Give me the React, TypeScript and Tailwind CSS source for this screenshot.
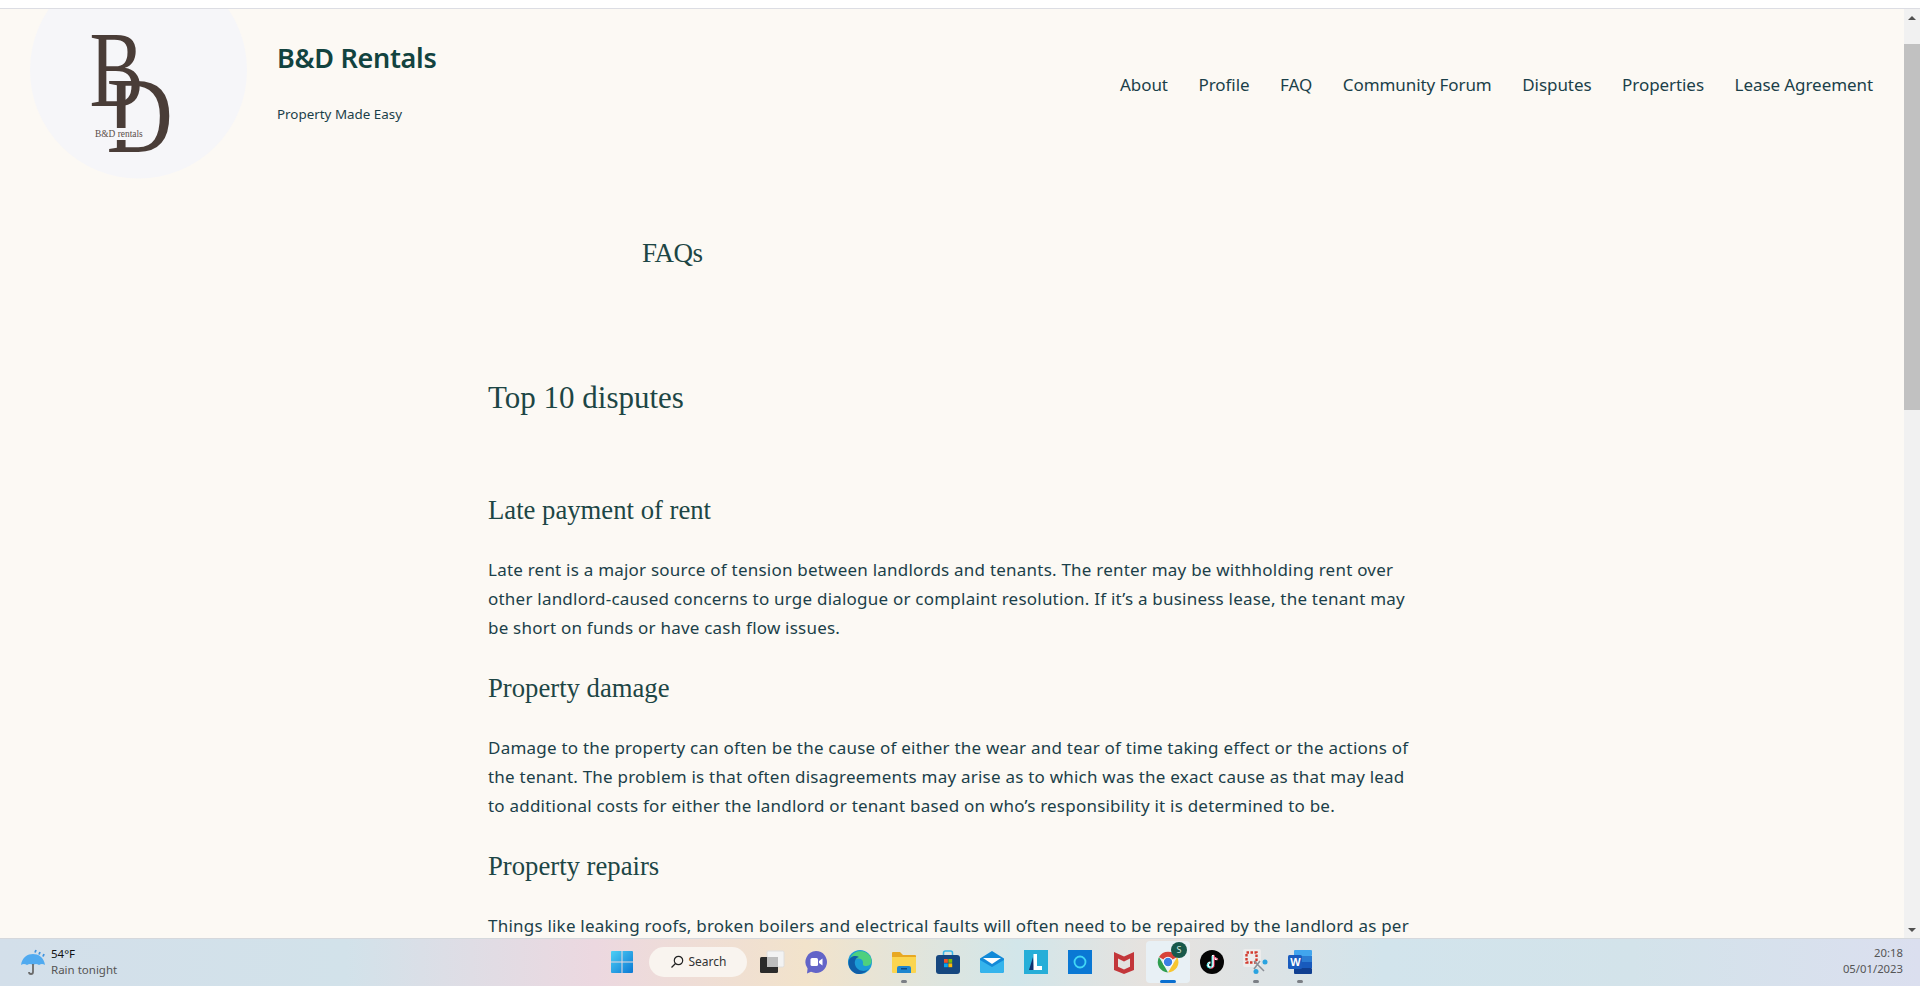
import React from "react";

const sans = "font-['Noto_Sans','Open_Sans',sans-serif]";
const serif = "font-['Liberation_Serif',serif]";

function Logo() {
  return (
    <svg width="217" height="170" viewBox="0 0 217 170" className="block shrink-0">
      <circle cx="108.500" cy="61" r="108.500" fill="#f6f6f9" />
      <g fill="#4a3d38" fontFamily="Liberation Serif, serif">
        <text x="0" y="0" fontSize="107" transform="translate(59.600 97) scale(0.76 1)">B</text>
        <text x="0" y="0" fontSize="107" transform="translate(76.500 143) scale(0.86 1)">D</text>
      </g>
      <rect x="83" y="119" width="14" height="12" fill="#f6f6f9" />
      <text x="65" y="128" fontSize="9.400" fill="#5a4d48" fontFamily="Liberation Serif, serif">B&amp;D rentals</text>
    </svg>
  );
}

function WinIcon() {
  return (
    <svg width="24" height="24" viewBox="0 0 24 24">
      <defs>
        <linearGradient id="w" x1="0" y1="0" x2="1" y2="1">
          <stop offset="0" stopColor="#4fd0f5" />
          <stop offset="1" stopColor="#0a78d4" />
        </linearGradient>
      </defs>
      <path d="M1 2a1 1 0 0 1 1-1h9.500v10.500H1zM12.500 1H22a1 1 0 0 1 1 1v9.500H12.500zM1 12.500h10.500V23H2a1 1 0 0 1-1-1zM12.500 12.500H23V22a1 1 0 0 1-1 1h-9.500z" fill="url(#w)" />
    </svg>
  );
}

const Slot = ({ children, dot, active }: { children: React.ReactNode; dot?: boolean; active?: boolean }) => (
  <div className={`relative flex h-[42px] w-[44px] items-center justify-center rounded ${active ? "bg-[#e8f0f5]" : ""}`}>
    {children}
    {dot && <span className="absolute bottom-0 left-[19px] h-[3px] w-[6px] rounded-full bg-[#7b7f85]" />}
    {active && <span className="absolute bottom-0 left-[14px] h-[3px] w-[16px] rounded-full bg-[#0a6fd0]" />}
  </div>
);

function TaskIcons() {
  return (
    <div className="flex items-center">
      <Slot>
        <svg width="26" height="24" viewBox="0 0 26 24">
          <rect x="8" y="1" width="17" height="16" rx="1.500" fill="#f3f3f3" stroke="#dedede" />
          <rect x="1" y="7" width="18" height="16" rx="1.500" fill="#2b2b2b" />
          <rect x="8" y="7" width="11" height="10" fill="#bdbdbd" />
        </svg>
      </Slot>
      <Slot>
        <svg width="24" height="24" viewBox="0 0 24 24">
          <path d="M12 1a11 11 0 1 1-5 20.800L3 23.500l.6-5A11 11 0 0 1 12 1z" fill="#6264c8" />
          <rect x="6.500" y="8" width="7.500" height="8" rx="1.500" fill="#fff" />
          <path d="M15 11l3.500-2.500v7L15 13z" fill="#fff" />
        </svg>
      </Slot>
      <Slot>
        <svg width="24" height="24" viewBox="0 0 24 24">
          <circle cx="12" cy="12" r="12" fill="#1b9bd6" />
          <path d="M3 7C6 0 18-1 22.500 7c2.500 5 .5 9-4 9-3 0-4-1-3.500-3 .5-4-5-6-8.500-3C5 11 4 13 4 15 3 12 2 10 3 7z" fill="#4ed07e" />
          <path d="M.5 12c1-6 7-7 10.500-5-4 1-5 5-3.500 9 2 5 10 7 14 2-3 4.500-8 6-11 6C5 24 0 18 .5 12z" fill="#0f5ea8" />
        </svg>
      </Slot>
      <Slot dot>
        <svg width="24" height="24" viewBox="0 0 24 24">
          <path d="M0 3a1 1 0 0 1 1-1h7l3 3h12a1 1 0 0 1 1 1v3H0z" fill="#e8a823" />
          <path d="M0 7h24v15a1 1 0 0 1-1 1H1a1 1 0 0 1-1-1z" fill="#fbd54f" />
          <path d="M5 23v-5a2 2 0 0 1 2-2h10a2 2 0 0 1 2 2v5z" fill="#1e86cf" />
          <rect x="9" y="18" width="6" height="1.500" fill="#0b4a85" />
        </svg>
      </Slot>
      <Slot>
        <svg width="24" height="24" viewBox="0 0 24 24">
          <path d="M7.500 6V3a2 2 0 0 1 2-2h5a2 2 0 0 1 2 2v3" fill="none" stroke="#37b6e8" strokeWidth="1.500" />
          <rect x="0" y="5" width="24" height="19" rx="3" fill="#16477f" />
          <rect x="8" y="9" width="3.800" height="3.800" fill="#f35325" />
          <rect x="12.400" y="9" width="3.800" height="3.800" fill="#81bc06" />
          <rect x="8" y="13.400" width="3.800" height="3.800" fill="#05a6f0" />
          <rect x="12.400" y="13.400" width="3.800" height="3.800" fill="#ffba08" />
        </svg>
      </Slot>
      <Slot>
        <svg width="24" height="24" viewBox="0 0 24 24">
          <path d="M0 8.500 12 1l12 7.500V21a2 2 0 0 1-2 2H2a2 2 0 0 1-2-2z" fill="#128ad8" />
          <path d="M3 8h18l-9 6z" fill="#fff" />
          <path d="M0 10l12 7 12-7v11a2 2 0 0 1-2 2H2a2 2 0 0 1-2-2z" fill="#35b4ec" />
        </svg>
      </Slot>
      <Slot>
        <svg width="24" height="24" viewBox="0 0 24 24">
          <rect width="24" height="24" fill="#26aed8" />
          <path d="M5 20 9 7l1 9h7v4z" fill="#10306e" />
          <path d="M9.500 4H13v12h5v4H9.500z" fill="#fff" />
        </svg>
      </Slot>
      <Slot>
        <svg width="24" height="24" viewBox="0 0 24 24">
          <rect width="24" height="24" fill="#0a78d4" />
          <circle cx="12" cy="12" r="5.500" fill="none" stroke="#41d7f5" strokeWidth="1.800" />
        </svg>
      </Slot>
      <Slot>
        <svg width="24" height="26" viewBox="0 0 24 26">
          <path d="M12 25 2 21V3l10 4.500L22 3v18zM6 17.800l6 2.600 6-2.600V9.500l-6 3-6-3z" fill="#c3363a" />
        </svg>
      </Slot>
      <Slot active>
        <svg width="24" height="24" viewBox="0 0 24 24">
          <path d="M12 12 3 7a10.500 10.500 0 0 1 18.200 0z" fill="#d8433a" />
          <path d="M12 22.500 21.200 7A10.500 10.500 0 0 1 12 22.500z" fill="#f7c631" />
          <path d="M12 22.500A10.500 10.500 0 0 1 3 7l5 8.500z" fill="#2f9e4f" />
          <circle cx="12" cy="12" r="5.200" fill="#fff" />
          <circle cx="12" cy="12" r="4.200" fill="#3c7fe6" />
        </svg>
        <span className={`absolute right-[3px] top-[1px] flex h-[16px] w-[16px] items-center justify-center rounded-full bg-[#17594c] text-[9px] text-[#cfe5de] ${sans}`}>S</span>
      </Slot>
      <Slot>
        <svg width="24" height="24" viewBox="0 0 24 24">
          <circle cx="12" cy="12" r="12" fill="#050505" />
          <path d="M13 5v10a2.500 2.500 0 1 1-2.500-2.500M13 5c.3 2.500 2 4 4.500 4.200" fill="none" stroke="#fff" strokeWidth="2.200" />
          <path d="M12 6v9.500a2.500 2.500 0 1 1-2.800-2.600" fill="none" stroke="#25e4e4" strokeWidth="0.900" />
          <path d="M14.200 5.500v10a2.500 2.500 0 0 1-3 2.600M14.200 6c.5 1.800 2 3 4 3.300" fill="none" stroke="#f5285a" strokeWidth="0.900" />
        </svg>
      </Slot>
      <Slot dot>
        <svg width="26" height="26" viewBox="0 0 26 26">
          <rect x="0" y="0" width="18" height="18" rx="2" fill="#ececec" />
          <rect x="3.500" y="3.500" width="10" height="10" fill="none" stroke="#d23b2e" strokeWidth="2.400" strokeDasharray="2.500 1.500" />
          <path d="M11 12l10 10M17 12l-6 8" stroke="#8a8f96" strokeWidth="1.500" />
          <circle cx="22" cy="13" r="2.500" fill="#2aa3e0" />
          <circle cx="13" cy="22.500" r="2.500" fill="#2aa3e0" />
        </svg>
      </Slot>
      <Slot dot>
        <svg width="24" height="24" viewBox="0 0 24 24">
          <rect x="6" y="0" width="18" height="6" rx="1" fill="#41a5ee" />
          <rect x="6" y="6" width="18" height="6" fill="#2b7cd3" />
          <rect x="6" y="12" width="18" height="6" fill="#185abd" />
          <rect x="6" y="18" width="18" height="6" rx="1" fill="#103f91" />
          <rect x="0" y="5" width="14" height="14" rx="1.500" fill="#1a5cbe" />
          <text x="2.200" y="15.500" fontSize="11" fontWeight="700" fill="#fff" fontFamily="Liberation Sans, sans-serif">W</text>
        </svg>
      </Slot>
    </div>
  );
}

function Taskbar() {
  return (
    <footer className={`flex h-[48px] shrink-0 items-center border-t border-[#d5d8dc] pb-[1px] bg-[linear-gradient(90deg,#d3dfea_0%,#d2e2ea_18%,#ecd8e0_31%,#f2e3cb_42%,#d2e6ea_53%,#e7e2de_60%,#d2e4ec_72%,#d3e3ea_85%,#dbdfef_100%)] ${sans}`}>
      <div className="flex w-[610px] items-center pl-[20px]">
        <svg width="26" height="26" viewBox="0 0 26 26">
          <path d="M1 16C2 8 8 5 13 5s11 3 12 11c-2-1.500-4-1.500-6 0-2-1.500-4-1.500-6 0-2-1.500-4-1.500-6 0-2-1.500-4-1.500-6 0z" fill="#50aaf0" />
          <path d="M13 15v8a2 2 0 0 1-4 0" fill="none" stroke="#6b6b6b" strokeWidth="1.800" />
          <path d="M16 1l-1 2.500M20 3l-1 2.500M24 5l-1 2.500" stroke="#3f93e0" strokeWidth="1.800" />
        </svg>
        <div className="ml-[5px] flex flex-col text-[11.500px] leading-[16px]">
          <span className="text-[#111]">54°F</span>
          <span className="text-[#555]">Rain tonight</span>
        </div>
      </div>
      <WinIcon />
      <div className="ml-[15px] mr-[3px] flex h-[30px] w-[98px] items-center justify-center gap-[5px] rounded-full bg-[#f9f4ef] text-[12px] text-[#333]">
        <svg width="14" height="14" viewBox="0 0 14 14" fill="none" stroke="#222" strokeWidth="1.200">
          <circle cx="8.500" cy="5.500" r="4.200" />
          <path d="M5.500 8.500 1.500 12.500" />
        </svg>
        Search
      </div>
      <TaskIcons />
      <div className="ml-auto flex flex-col items-end pb-[2px] pr-[17px] text-[11.300px] leading-[16px] text-[#555]">
        <span>20:18</span>
        <span>05/01/2023</span>
      </div>
    </footer>
  );
}

function Scrollbar() {
  return (
    <div className="flex w-[16px] shrink-0 flex-col items-center bg-[#f1f1f1]">
      <div className="flex h-[17px] items-center">
        <div className="h-0 w-0 border-x-[4px] border-b-[4px] border-x-transparent border-b-[#505050]" />
      </div>
      <div className="mt-[18px] h-[366px] w-full bg-[#c1c1c1]" />
      <div className="mt-auto flex h-[17px] items-center">
        <div className="h-0 w-0 border-x-[4px] border-t-[4px] border-x-transparent border-t-[#505050]" />
      </div>
    </div>
  );
}

const nav = ["About", "Profile", "FAQ", "Community Forum", "Disputes", "Properties", "Lease Agreement"];

function Section({ title, children }: { title: string; children: React.ReactNode }) {
  return (
    <section>
      <h3 className={`text-[26.700px] leading-[34px] text-[#1d4645] ${serif}`}>{title}</h3>
      <p className="mt-[28px] text-[17px] leading-[29px] tracking-[0.22px] text-[#1b3f49]">{children}</p>
    </section>
  );
}

export default function App() {
  return (
    <div className={`flex h-screen flex-col overflow-hidden bg-white ${sans}`}>
      <div className="h-[9px] shrink-0 border-b border-[#dcdde3] bg-white" />
      <div className="flex min-h-0 flex-1">
        <main className="min-w-0 flex-1 overflow-hidden bg-[#fcf9f4]">
          <header className="flex h-[170px] items-start pl-[30px] pr-[31px]">
            <Logo />
            <div className="ml-[30px] pt-[31px]">
              <div className="text-[27px] font-semibold leading-[36px] tracking-[-0.3px] text-[#12433f]">B&amp;D Rentals</div>
              <div className="mt-[28px] text-[13.400px] leading-[20px] text-[#1b3f49]">Property Made Easy</div>
            </div>
            <nav className="ml-auto mt-[64px] flex gap-[30.600px] text-[17px] leading-[24px] tracking-[-0.07px] text-[#1b3f49]">
              {nav.map((n) => (
                <span key={n}>{n}</span>
              ))}
            </nav>
          </header>
          <h1 className={`ml-[642px] mt-[55px] text-[27px] leading-[38px] tracking-[-0.5px] text-[#1d4645] ${serif}`}>FAQs</h1>
          <div className="ml-[488px] w-[922px]">
            <h2 className={`mt-[105px] text-[31px] leading-[42px] text-[#1d4645] ${serif}`}>Top 10 disputes</h2>
            <div className="mt-[74px] flex flex-col gap-[29px]">
              <Section title="Late payment of rent">
                Late rent is a major source of tension between landlords and tenants. The renter may be withholding rent over other landlord-caused concerns to urge dialogue or complaint resolution. If it’s a business lease, the tenant may be short on funds or have cash flow issues.
              </Section>
              <Section title="Property damage">
                Damage to the property can often be the cause of either the wear and tear of time taking effect or the actions of the tenant. The problem is that often disagreements may arise as to which was the exact cause as that may lead to additional costs for either the landlord or tenant based on who’s responsibility it is determined to be.
              </Section>
              <Section title="Property repairs">
                Things like leaking roofs, broken boilers and electrical faults will often need to be repaired by the landlord as per the terms of the lease agreement.
              </Section>
            </div>
          </div>
        </main>
        <Scrollbar />
      </div>
      <Taskbar />
    </div>
  );
}
